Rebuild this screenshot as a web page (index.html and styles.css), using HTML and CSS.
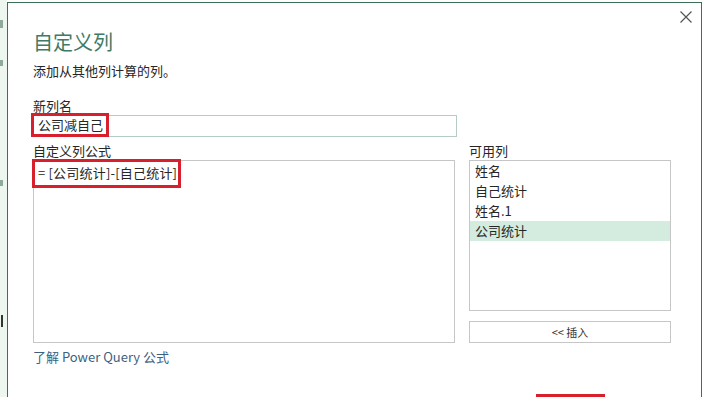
FILE: index.html
```html
<!DOCTYPE html>
<html lang="zh">
<head>
<meta charset="utf-8">
<link rel="stylesheet" href="styles.css">
</head>
<body>
<div class="page">
  <div class="backdrop">
    <span class="bit b1"></span><span class="bit b2"></span><span class="bit b3"></span><span class="bit b4"></span>
  </div>
  <div class="window">
    <button class="close" aria-label="关闭">
      <svg width="12" height="12" viewBox="0 0 12 12"><path d="M0.5 0.5 L11.5 11.5 M11.5 0.5 L0.5 11.5" stroke="#555" stroke-width="1.2" fill="none"/></svg>
    </button>
    <h1 class="title">自定义列</h1>
    <p class="subtitle">添加从其他列计算的列。</p>
    <div class="field">
      <label class="label">新列名</label>
      <div class="name-input"><span class="hl name-hl">公司减自己</span></div>
    </div>
    <div class="main">
      <div class="formula-col">
        <label class="label">自定义列公式</label>
        <div class="formula"><span class="hl formula-hl">= [公司统计]-[自己统计]</span></div>
        <a class="link" href="#">了解 Power Query 公式</a>
      </div>
      <div class="avail-col">
        <label class="label">可用列</label>
        <ul class="list">
          <li>姓名</li>
          <li>自己统计</li>
          <li>姓名.1</li>
          <li class="sel">公司统计</li>
        </ul>
        <button class="insert">&lt;&lt; 插入</button>
      </div>
    </div>
    <div class="footer"><span class="ok-hl"></span></div>
  </div>
</div>
</body>
</html>
```
FILE: styles.css
```css
* { box-sizing: border-box; }
html, body { margin: 0; padding: 0; }
body {
  width: 704px;
  height: 397px;
  overflow: hidden;
  background: #ffffff;
  font-family: "Noto Sans CJK SC", "Noto Sans", sans-serif;
  color: #262626;
}
.page {
  display: flex;
  height: 397px;
  padding-top: 2px;
  overflow: hidden;
}
.backdrop {
  width: 7px;
  flex: none;
  background: #eef6f0;
  position: relative;
  margin-top: -2px;
}
.bit { position: absolute; left: 0; width: 3px; background: #8fa99a; }
.b1 { top: 20px; height: 8px; }
.b2 { top: 60px; height: 6px; }
.b3 { top: 180px; height: 6px; }
.b4 { top: 315px; height: 12px; left: 1px; width: 2px; background: #333; }
.window {
  position: relative;
  width: 695px;
  height: 420px;
  border: 1px solid #3e7058;
  background: #fff;
  padding: 26px 30px 0 25px;
}
.close {
  position: absolute;
  top: 8px;
  right: 9px;
  border: 0;
  background: none;
  padding: 0;
  width: 12px;
  height: 12px;
  display: flex;
}
.title {
  margin: 0;
  font-weight: normal;
  font-size: 20px;
  line-height: 26px;
  color: #3e7a66;
}
.subtitle {
  margin: 7px 0 0;
  font-size: 13px;
  line-height: 18px;
}
.label {
  display: block;
  font-size: 13px;
  line-height: 18px;
}
.field { margin-top: 17px; }
.name-input {
  width: 424px;
  height: 22px;
  border: 1px solid #b5cbc6;
  position: relative;
}
.hl {
  position: absolute;
  border: 3px solid #d8202d;
  font-size: 13px;
  line-height: 18px;
  white-space: nowrap;
}
.name-hl {
  left: -3px;
  top: -3px;
  width: 78px;
  height: 24px;
  padding-left: 4px;
}
.main {
  display: flex;
  margin-top: 5px;
}
.formula-col {
  width: 424px;
}
.formula {
  position: relative;
  height: 183px;
  border: 1px solid #c6c6c6;
}
.formula-hl {
  left: -2px;
  top: -2px;
  width: 149px;
  height: 29px;
  padding: 2px 0 0 3px;
  letter-spacing: 0.2px;
}
.link {
  display: block;
  margin-top: 5px;
  font-size: 13px;
  line-height: 18px;
  color: #3d5f80;
  text-decoration: none;
}
.avail-col {
  margin-left: 14px;
  width: 202px;
}
.list {
  list-style: none;
  margin: 0;
  padding: 0;
  height: 151px;
  border: 1px solid #c6c6c6;
}
.list li {
  height: 20px;
  line-height: 19px;
  font-size: 13px;
  padding-left: 5px;
}
.list li.sel { background: #d3ecdf; }
.insert {
  display: block;
  margin-top: 10px;
  width: 202px;
  height: 22px;
  border: 1px solid #c6c6c6;
  background: #fff;
  font-family: "Noto Sans CJK SC", sans-serif;
  font-size: 11px;
  color: #333;
  padding: 0;
}
.footer {
  position: relative;
  height: 40px;
}
.ok-hl {
  position: absolute;
  left: 503px;
  top: 28px;
  width: 69px;
  height: 20px;
  border: 3px solid #d8202d;
}
```
